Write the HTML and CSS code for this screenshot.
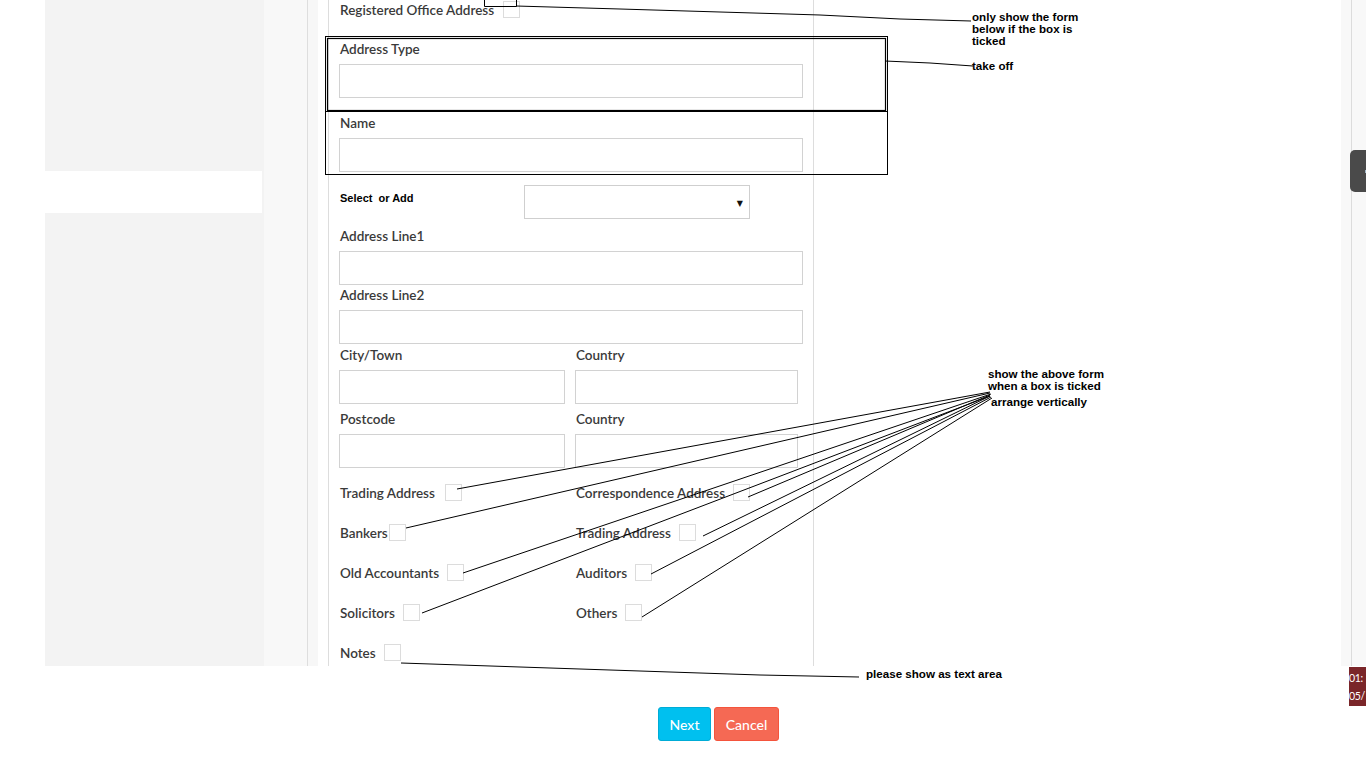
FILE: index.html
```html
<!DOCTYPE html>
<html>
<head>
<meta charset="utf-8">
<link rel="stylesheet" href="styles.css">
</head>
<body>
<div class="app">
  <div class="blank-left"></div>
  <div class="sidebar"><div class="side-strip"></div></div>
  <div class="gutter"></div>
  <div class="gutter2"></div>
  <div class="gutter3"></div>
  <div class="panel">
    <div class="check-row first">
      <span class="lbl">Registered Office Address</span><span class="cb gap9"></span>
    </div>

    <div class="field f-type">
      <div class="lbl">Address Type</div>
      <div class="input"></div>
    </div>
    <div class="field f-name">
      <div class="lbl">Name</div>
      <div class="input"></div>
    </div>

    <div class="select-row">
      <div class="sel-label">Select&nbsp; or Add</div>
      <div class="select"><span class="caret">&#9660;</span></div>
    </div>

    <div class="field f-al1">
      <div class="lbl">Address Line1</div>
      <div class="input"></div>
    </div>
    <div class="field f-al2">
      <div class="lbl">Address Line2</div>
      <div class="input"></div>
    </div>

    <div class="two-col f-city">
      <div class="field">
        <div class="lbl">City/Town</div>
        <div class="input"></div>
      </div>
      <div class="field">
        <div class="lbl">Country</div>
        <div class="input"></div>
      </div>
    </div>
    <div class="two-col f-post">
      <div class="field">
        <div class="lbl">Postcode</div>
        <div class="input"></div>
      </div>
      <div class="field">
        <div class="lbl">Country</div>
        <div class="input"></div>
      </div>
    </div>

    <div class="checks">
      <div class="check-row"><span class="lbl">Trading Address</span><span class="cb gap10"></span></div>
      <div class="check-row"><span class="lbl">Correspondence Address</span><span class="cb"></span></div>
      <div class="check-row"><span class="lbl">Bankers</span><span class="cb gap0"></span></div>
      <div class="check-row"><span class="lbl">Trading Address</span><span class="cb"></span></div>
      <div class="check-row"><span class="lbl">Old Accountants</span><span class="cb"></span></div>
      <div class="check-row"><span class="lbl">Auditors</span><span class="cb"></span></div>
      <div class="check-row"><span class="lbl">Solicitors</span><span class="cb"></span></div>
      <div class="check-row"><span class="lbl">Others</span><span class="cb"></span></div>
      <div class="check-row"><span class="lbl">Notes</span><span class="cb"></span></div>
    </div>
  </div>
  <div class="main-right"></div>
  <div class="rightbar"><div class="rb-a"></div><div class="rb-b"></div></div>
</div>

<div class="footer">
  <button class="btn btn-next">Next</button>
  <button class="btn btn-cancel">Cancel</button>
</div>

<div class="tab-handle"><span class="tab-dot"></span></div>
<div class="clock"><div>01:</div><div>05/</div></div>

<div class="annotations">
  <svg class="ann-svg" width="1366" height="768" viewBox="0 0 1366 768">
    <g fill="none" stroke="#000" stroke-width="1">
      <path d="M484.5 0 V6.5 H516.5 V0"/>
      <polyline points="516,6 620,9 720,12 820,15 900,19 971,21"/>
      <rect x="325.5" y="36.5" width="562" height="138"/>
      <rect x="327.5" y="38.5" width="558" height="72" stroke-width="1.2"/>
      <line x1="325" y1="111.5" x2="887" y2="111.5"/>
      <polyline points="885,61 930,63 973,66"/>
      <line x1="990" y1="392" x2="457" y2="489"/>
      <line x1="990" y1="393" x2="406" y2="528"/>
      <line x1="990" y1="395" x2="748" y2="497"/>
      <line x1="990" y1="396" x2="703" y2="536"/>
      <line x1="991" y1="394" x2="463" y2="573"/>
      <line x1="991" y1="397" x2="651" y2="574"/>
      <line x1="990" y1="396" x2="422" y2="613"/>
      <line x1="992" y1="398" x2="642" y2="617"/>
      <polyline points="401,663 520,667 640,671 760,675 859,677"/>
    </g>
  </svg>
  <div class="note n1">only show the form<br>below if the box is<br>ticked</div>
  <div class="note n2">take off</div>
  <div class="note n3">show the above form<br>when a box is ticked</div>
  <div class="note n4">arrange vertically</div>
  <div class="note n5">please show as text area</div>
</div>
</body>
</html>
```

FILE: styles.css
```css
html, body {
  margin: 0;
  padding: 0;
}
body {
  width: 1366px;
  height: 768px;
  overflow: hidden;
  position: relative;
  background: #fff;
  font-family: "Lato", "Open Sans", sans-serif;
  color: #333;
}

.app {
  display: flex;
  height: 666px;
}
.blank-left {
  width: 45px;
  background: #fff;
}
.sidebar {
  width: 219px;
  background: #f3f3f3;
  padding-top: 171px;
  box-sizing: border-box;
}
.side-strip {
  width: 217px;
  height: 42px;
  background: #fff;
}
.gutter {
  width: 43px;
  background: #f8f8f8;
  border-right: 1px solid #dedede;
}
.gutter2 {
  width: 10px;
  background: #f7f7f7;
}
.gutter3 {
  width: 10px;
  background: #fff;
}
.panel {
  border-left: 1px solid #dddddd;
  border-right: 1px solid #dddddd;
  padding: 0 10px;
  box-sizing: border-box;
  width: 486px;
  background: #fff;
  overflow: hidden;
}
.main-right {
  width: 527px;
  background: #fff;
}
.rightbar {
  flex: 1;
  display: flex;
  background: #f8f8f8;
}
.rb-a {
  width: 10px;
  border-right: 1px solid #dcdcdc;
}
.rb-b {
  flex: 1;
}

.lbl {
  font-size: 13.5px;
  font-weight: 600;
  line-height: 18px;
  color: #3a3a3a;
  padding-left: 1px;
  white-space: nowrap;
}

.input {
  height: 34px;
  border: 1px solid #d2d2d2;
  box-sizing: border-box;
  background: #fff;
}
.field .lbl {
  margin-bottom: 6px;
}

.check-row {
  display: flex;
  align-items: center;
  height: 17px;
}
.check-row.first {
  margin-top: 1px;
}
.cb {
  width: 17px;
  height: 17px;
  border: 1px solid #dcdcdc;
  box-sizing: border-box;
  margin-left: 8px;
  background: #fff;
}
.cb.gap9 { margin-left: 9px; }
.cb.gap10 { margin-left: 10px; }
.cb.gap0 { margin-left: 1px; }

.f-type { margin-top: 22px; }
.f-name { margin-top: 16px; }
.f-al1 { margin-top: 8px; }
.f-al2 { margin-top: 1px; }
.f-city { margin-top: 2px; }
.f-post { margin-top: 6px; }

.two-col {
  display: grid;
  grid-template-columns: 226px 223px;
  column-gap: 10px;
}

.select-row {
  display: flex;
  margin-top: 13px;
  height: 34px;
}
.sel-label {
  width: 184px;
  padding-top: 7px;
  padding-left: 1px;
  font-family: "Liberation Sans", Arial, sans-serif;
  font-size: 11px;
  font-weight: 700;
  color: #000;
  line-height: 13px;
}
.select {
  width: 226px;
  height: 34px;
  border: 1px solid #cfcfcf;
  box-sizing: border-box;
  display: flex;
  align-items: center;
  justify-content: flex-end;
  padding-right: 6px;
}
.caret {
  font-size: 8px;
  color: #111;
  font-family: "DejaVu Sans", sans-serif;
  padding-top: 2px;
}

.checks {
  margin-top: 16px;
  display: grid;
  grid-template-columns: 236px 1fr;
  row-gap: 23px;
}

.footer {
  display: flex;
  gap: 3px;
  padding-top: 41px;
  padding-left: 658px;
}
.btn {
  height: 34px;
  border-radius: 3px;
  border: 1px solid;
  color: #fff;
  font-family: "Lato", "Open Sans", sans-serif;
  font-size: 14px;
  font-weight: 500;
  padding: 0;
  box-sizing: border-box;
}
.btn-next {
  width: 53px;
  background: #00c0ef;
  border-color: #00acd6;
}
.btn-cancel {
  width: 65px;
  background: #f56954;
  border-color: #f4543c;
}

.tab-handle {
  position: absolute;
  left: 1350px;
  top: 150px;
  width: 30px;
  height: 42px;
  background: #4a4a4a;
  border-radius: 5px;
}
.tab-dot {
  position: absolute;
  left: 15px;
  top: 20px;
  width: 2px;
  height: 3px;
  background: #9fb6c6;
}
.clock {
  position: absolute;
  left: 1349px;
  top: 667px;
  width: 17px;
  height: 39px;
  background: #7a2629;
  color: #fff;
  font-family: "Lato", sans-serif;
  font-size: 10.5px;
  letter-spacing: -0.3px;
  line-height: 18px;
  padding-top: 2px;
  box-sizing: border-box;
  overflow: hidden;
}

.annotations {
  position: absolute;
  left: 0;
  top: 0;
  width: 1366px;
  height: 768px;
  pointer-events: none;
}
.ann-svg {
  position: absolute;
  left: 0;
  top: 0;
}
.note {
  position: absolute;
  font-family: "Liberation Sans", Arial, sans-serif;
  font-size: 11.6px;
  font-weight: 700;
  line-height: 12px;
  color: #000;
  white-space: nowrap;
}
.n1 { left: 972px; top: 11px; }
.n2 { left: 972px; top: 60px; }
.n3 { left: 988px; top: 368px; }
.n4 { left: 991px; top: 396px; }
.n5 { left: 866px; top: 668px; }
```
